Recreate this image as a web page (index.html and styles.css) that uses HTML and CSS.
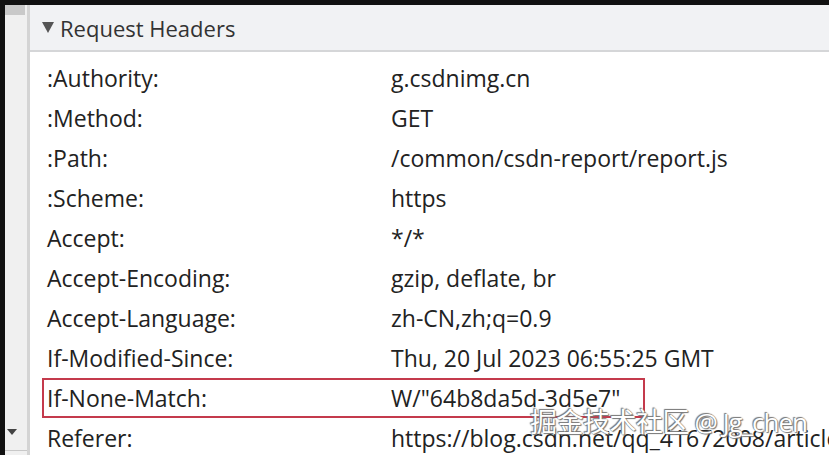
FILE: index.html
```html
<!DOCTYPE html>
<html lang="en">
<head>
    <meta charset="UTF-8">
    <title>Request Headers</title>
    <link rel="stylesheet" href="styles.css">
</head>
<body>
    <div class="window">
        <div class="scrollbar">
            <div class="thumb"></div>
            <div class="arrow-down"></div>
        </div>
        <div class="panel">
            <div class="panel-header">
                <span class="caret"></span>
                <span class="title">Request Headers</span>
            </div>
            <div class="rows">
                <div class="row"><span class="key">:Authority:</span><span class="val">g.csdnimg.cn</span></div>
                <div class="row"><span class="key">:Method:</span><span class="val">GET</span></div>
                <div class="row"><span class="key">:Path:</span><span class="val">/common/csdn-report/report.js</span></div>
                <div class="row"><span class="key">:Scheme:</span><span class="val">https</span></div>
                <div class="row"><span class="key">Accept:</span><span class="val">*/*</span></div>
                <div class="row"><span class="key">Accept-Encoding:</span><span class="val">gzip, deflate, br</span></div>
                <div class="row"><span class="key">Accept-Language:</span><span class="val">zh-CN,zh;q=0.9</span></div>
                <div class="row"><span class="key">If-Modified-Since:</span><span class="val">Thu, 20 Jul 2023 06:55:25 GMT</span></div>
                <div class="row highlight"><span class="key">If-None-Match:</span><span class="val">W/"64b8da5d-3d5e7"</span></div>
                <div class="row"><span class="key">Referer:</span><span class="val">https://blog.csdn.net/qq_41672008/article</span></div>
            </div>
        </div>
    </div>
    <div class="watermark">掘金技术社区 <span class="handle">@ Jg_chen</span></div>
</body>
</html>
```

FILE: styles.css
```css
* {
    margin: 0;
    padding: 0;
    box-sizing: border-box;
}

body {
    background: #111;
    width: 829px;
    height: 455px;
    overflow: hidden;
    position: relative;
    font-family: "Open Sans", "Noto Sans", sans-serif;
}

.window {
    display: flex;
    padding: 5px 0 0 5px;
    height: 100%;
}

.scrollbar {
    width: 25px;
    flex-shrink: 0;
    background: #f0f0f0;
    border-right: 3px solid #d4d4d4;
    position: relative;
}

.thumb {
    height: 10px;
    width: 20px;
    background: #c9c9c9;
}

.arrow-down {
    position: absolute;
    left: 2px;
    top: 424px;
    width: 0;
    height: 0;
    border-left: 5px solid transparent;
    border-right: 5px solid transparent;
    border-top: 6px solid #444;
}

.scrollbar::after {
    content: "";
    position: absolute;
    left: 0;
    right: 0;
    top: 445px;
    height: 1px;
    background: #c8c8c8;
}

.panel {
    flex: 1;
    background: #fff;
    overflow: hidden;
}

.panel-header {
    height: 47px;
    background: #f1f2f4;
    border-bottom: 2px solid #d5d6d8;
    display: flex;
    align-items: center;
    padding-left: 12px;
    color: #333;
}

.caret {
    width: 0;
    height: 0;
    border-left: 6px solid transparent;
    border-right: 6px solid transparent;
    border-top: 11px solid #555;
    margin-right: 6px;
}

.title {
    font-size: 22px;
}

.rows {
    padding-top: 6px;
}

.row {
    display: grid;
    grid-template-columns: 344px auto;
    align-items: center;
    height: 40px;
    padding-left: 17px;
    font-size: 23px;
    color: #222;
    white-space: nowrap;
}

.row.highlight {
    margin-left: 12px;
    padding-left: 3px;
    width: 603px;
    border: 2px solid #c43a4c;
}

.watermark {
    position: absolute;
    left: 530px;
    top: 401px;
    font-size: 27px;
    color: #fff;
    font-family: "Noto Sans CJK SC", sans-serif;
    text-shadow: 0 0 1px #666, 1px 1px 1px #777, -1px -1px 1px #777;
    letter-spacing: -0.5px;
    white-space: nowrap;
}

.handle {
    font-family: "Open Sans", sans-serif;
    letter-spacing: -1px;
    font-size: 26px;
}
```
